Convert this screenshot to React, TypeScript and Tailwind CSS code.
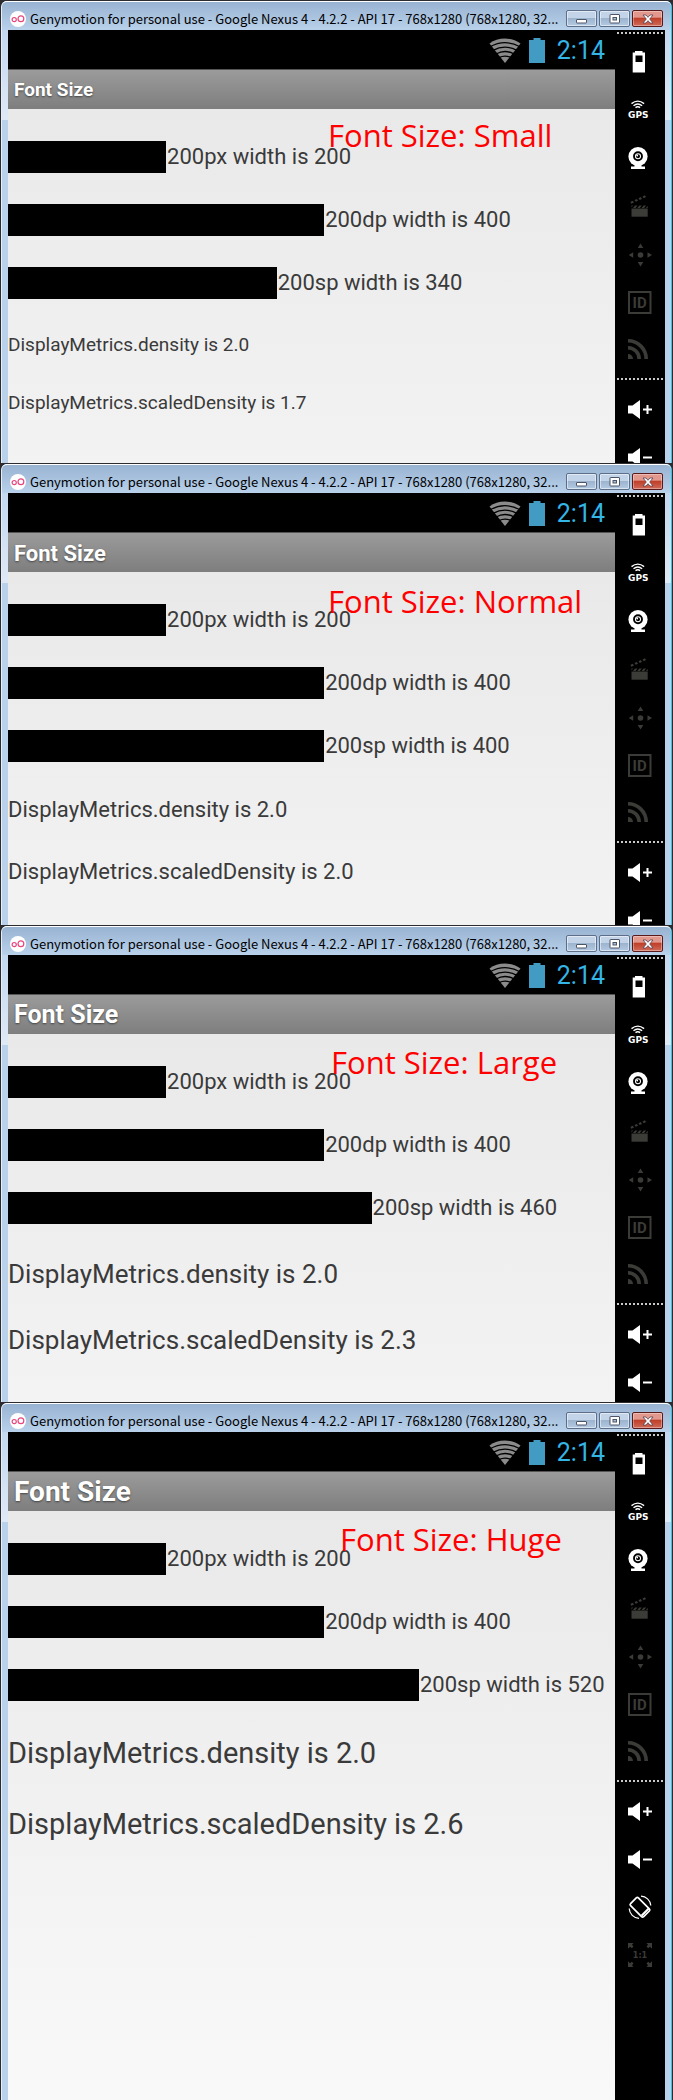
import type { ReactNode } from "react";

type Bar = { unit: string; pixels: number };

type DeviceWindow = {
  name: string;
  scaledDensity: string;
  bars: Bar[];
  toolCount: number;
  titleClass: string;
  metricClass: string;
  screenClass: string;
  noteClass: string;
};

const SCREEN_PIXELS = 768;

const bars = (sp: number): Bar[] => [
  { unit: "px", pixels: 200 },
  { unit: "dp", pixels: 400 },
  { unit: "sp", pixels: sp },
];

const windows: DeviceWindow[] = [
  {
    name: "Small",
    scaledDensity: "1.7",
    bars: bars(340),
    toolCount: 2,
    titleClass: "text-[19px]",
    metricClass: "text-[19px] leading-[26px]",
    screenClass: "pb-[47px]",
    noteClass: "left-[320px] top-[6px]",
  },
  {
    name: "Normal",
    scaledDensity: "2.0",
    bars: bars(400),
    toolCount: 2,
    titleClass: "text-[22px]",
    metricClass: "text-[22px] leading-[30px]",
    screenClass: "pb-[38px]",
    noteClass: "left-[320px] top-[9px]",
  },
  {
    name: "Large",
    scaledDensity: "2.3",
    bars: bars(460),
    toolCount: 2,
    titleClass: "text-[25px]",
    metricClass: "text-[26px] leading-[34px]",
    screenClass: "pb-[45px]",
    noteClass: "left-[323px] top-[8px]",
  },
  {
    name: "Huge",
    scaledDensity: "2.6",
    bars: bars(520),
    toolCount: 4,
    titleClass: "text-[28px]",
    metricClass: "text-[29px] leading-[39px]",
    screenClass: "pb-[256px]",
    noteClass: "left-[332px] top-[8px]",
  },
];

function Icon({ children }: { children: ReactNode }) {
  return (
    <svg viewBox="0 0 24 24" className="size-6 overflow-visible" aria-hidden="true">
      {children}
    </svg>
  );
}

const DIM = "#3b3b37";

const sensorTools: { label: string; icon: ReactNode }[] = [
  {
    label: "Battery",
    icon: (
      <path fill="#fff" fillRule="evenodd" d="M7 1h7.500v1.500H17v20H4.700v-20H7zM7.500 5.500V12h7V5.500z" />
    ),
  },
  {
    label: "GPS",
    icon: (
      <>
        <g fill="none" stroke="#fff" strokeWidth="1.400">
          <path d="M3.500 5.600Q9.800 0.600 16.100 5.600" />
          <path d="M5.500 7.700Q9.800 4.200 14.100 7.700" />
          <path d="M7.500 9.600Q9.800 7.800 12.100 9.600" />
        </g>
        <text x="0" y="20" fill="#fff" fontSize="9" fontWeight="700" fontFamily="DejaVu Sans, sans-serif">
          GPS
        </text>
      </>
    ),
  },
  {
    label: "Camera",
    icon: (
      <>
        <path fill="#fff" d="M3 20.500h3.500V18h7v2.500H17V23H3z" />
        <circle cx="10" cy="10.500" r="9.600" fill="#fff" />
        <circle cx="10" cy="10.300" r="4" fill="#fff" stroke="#000" strokeWidth="1.900" />
        <circle cx="10" cy="10.300" r="2" fill="#000" />
        <circle cx="9.200" cy="9.500" r="0.900" fill="#fff" />
      </>
    ),
  },
  {
    label: "Capture",
    icon: (
      <g fill={DIM}>
        <path d="M3.500 14.500h16.200v8.200H3.500z" />
        <path d="M3.500 11.500h1.500l-1.500 2zM7 11.500h2.500l-2 2.500H5zM11.300 11.500h2.500l-2 2.500H9.300zM15.600 11.500h2.500l-2 2.500h-2.500zM19.700 11.800v2.200h-1.700z" />
        <path d="M2.500 7.800l2.300-1 1.200 1.700-2.800 1.300zM6.500 6l2.300-1.100 1.200 1.800-2.300 1zM10.500 4.200l2.300-1.100 1.200 1.800-2.300 1zM14.500 2.400l2.500-1.200 1 1.900-2.300 1.100z" />
      </g>
    ),
  },
  {
    label: "Move",
    icon: (
      <g fill={DIM}>
        <circle cx="12.500" cy="13" r="2.800" />
        <path d="M12.500 1.500l2.800 4.500h-5.600zM12.500 24.500l2.800-4.500h-5.600zM.7 13l4.500-2.800v5.600zM24 13l-4.500-2.800v5.600z" />
      </g>
    ),
  },
  {
    label: "Device ID",
    icon: (
      <>
        <rect x="1" y="2" width="21.500" height="21" fill="none" stroke={DIM} strokeWidth="2" />
        <text x="4.500" y="18" fill={DIM} fontSize="15" fontWeight="700" fontFamily="Roboto, sans-serif">
          ID
        </text>
      </>
    ),
  },
  {
    label: "Network",
    icon: (
      <>
        <g fill="none" stroke={DIM} strokeWidth="3.600">
          <path d="M0 2.800A18.200 18.200 0 0 1 18.200 21" />
          <path d="M0 9.800A11.200 11.200 0 0 1 11.200 21" />
        </g>
        <path fill={DIM} d="M0 16a5 5 0 0 1 5 5H0z" />
      </>
    ),
  },
];

const speaker = <path fill="#fff" d="M0 8.500h4.500L12 3v19l-7.500-5.500H0z" />;

const deviceTools: { label: string; icon: ReactNode }[] = [
  {
    label: "Volume up",
    icon: (
      <>
        {speaker}
        <path fill="#fff" d="M15 11.500h3.500V8h2v3.500H24v2h-3.500V17h-2v-3.500H15z" />
      </>
    ),
  },
  {
    label: "Volume down",
    icon: (
      <>
        {speaker}
        <path fill="#fff" d="M15 11.500h9v2h-9z" />
      </>
    ),
  },
  {
    label: "Rotate",
    icon: (
      <g fill="none" stroke="#fff">
        <rect x="6.500" y="3" width="11" height="18.500" rx="1.500" strokeWidth="1.700" transform="rotate(-45 12 12.300)" />
        <path strokeWidth="2.200" d="M13.500 20.800l7-7" />
        <path strokeWidth="1.200" d="M13 1.200c5 0 9.300 4 9.800 9.300M1.200 13.500c.3 5.500 4.500 9.500 9.800 9.800" />
      </g>
    ),
  },
  {
    label: "Actual size",
    icon: (
      <>
        <g fill={DIM}>
          <path d="M0 0h5.500L4 1.700l1.500 1.800-1.700 1.700L2 3.700.300 5.500H0zM24 0h-5.500L20 1.700l-1.500 1.800 1.700 1.700L22 3.700l1.700 1.800H24zM0 24h5.500L4 22.300l1.500-1.800-1.700-1.700L2 20.300.300 18.500H0zM24 24h-5.500l1.500-1.700-1.500-1.800 1.700-1.700 1.800 1.500 1.700-1.800H24z" />
        </g>
        <text x="12" y="15" textAnchor="middle" fill={DIM} fontSize="8" fontWeight="700" fontFamily="DejaVu Sans, sans-serif">
          1:1
        </text>
      </>
    ),
  },
];

function Dots() {
  return (
    <div className="h-[2px] shrink-0 bg-[repeating-linear-gradient(90deg,#c8c8c8_0_2px,transparent_2px_4px)]" />
  );
}

function Tools({ items }: { items: { label: string; icon: ReactNode }[] }) {
  return items.map((tool) => (
    <button key={tool.label} type="button" aria-label={tool.label} className="flex h-12 shrink-0 items-center justify-center">
      <Icon>{tool.icon}</Icon>
    </button>
  ));
}

function ToolRail({ toolCount }: { toolCount: number }) {
  return (
    <aside className="flex w-[50px] shrink-0 flex-col overflow-hidden bg-black px-[2px] pt-[2px] contain-size">
      <Dots />
      <div className="flex shrink-0 flex-col pt-1 pb-1">
        <Tools items={sensorTools} />
      </div>
      <Dots />
      <div className="flex shrink-0 flex-col pt-[5px]">
        <Tools items={deviceTools.slice(0, toolCount)} />
      </div>
    </aside>
  );
}

const captionButton =
  "flex h-[17px] w-[31px] items-center justify-center rounded-[2px] border border-[#5d6f88] bg-[linear-gradient(#c3d4e8_45%,#9db4cf_50%,#b4cae3)] shadow-[inset_0_0_0_1px_rgba(255,255,255,0.5)]";

function TitleBar() {
  return (
    <header className="flex h-[29px] items-center rounded-t-[5px] border-t border-white bg-linear-to-b from-[#98b3d2] to-[#b9d1ea] pt-[5px] pr-[8px] pl-[8px]">
      <svg viewBox="0 0 16 16" className="size-4 shrink-0" aria-hidden="true">
        <circle cx="8" cy="8" r="8" fill="#fff" />
        <g fill="none" stroke="#e8457c" strokeWidth="1.200">
          <circle cx="4.200" cy="8.600" r="2.100" />
          <circle cx="10.900" cy="7.700" r="2.900" />
        </g>
      </svg>
      <h1 className="ml-1 min-w-0 flex-1 overflow-hidden font-['Noto_Sans_CJK_SC',sans-serif] text-[13px] leading-5 whitespace-nowrap text-black">
        Genymotion for personal use - Google Nexus 4 - 4.2.2 - API 17 - 768x1280 (768x1280, 32...
      </h1>
      <div className="flex gap-[2px]">
        <button type="button" aria-label="Minimize" className={captionButton}>
          <svg viewBox="0 0 12 12" className="size-3" aria-hidden="true">
            <rect x="0.500" y="6.500" width="10" height="3.500" rx="0.500" fill="#fff" stroke="#4c5566" />
          </svg>
        </button>
        <button type="button" aria-label="Maximize" className={captionButton}>
          <svg viewBox="0 0 12 12" className="size-3" aria-hidden="true">
            <rect x="1" y="1.500" width="9.500" height="8.500" rx="0.500" fill="#fff" stroke="#4c5566" />
            <rect x="4" y="4.500" width="3.500" height="2.500" fill="#a9bdd6" stroke="#4c5566" />
          </svg>
        </button>
        <button
          type="button"
          aria-label="Close"
          className="flex h-[17px] w-[31px] items-center justify-center rounded-[2px] border border-[#5a1a1c] bg-[linear-gradient(#e2988c_40%,#c0402a_50%,#cf6a58)] shadow-[inset_0_0_0_1px_rgba(255,255,255,0.35)]"
        >
          <svg viewBox="0 0 12 12" className="size-3" aria-hidden="true">
            <path
              d="M1 2h3l2 2.300L8 2h3L7.700 6 11 10H8L6 7.700 4 10H1l3.300-4z"
              fill="#fff"
              stroke="#544050"
              strokeWidth="0.800"
            />
          </svg>
        </button>
      </div>
    </header>
  );
}

function StatusBar() {
  return (
    <div className="flex h-[39px] items-center justify-end bg-black pt-px pr-[10px]">
      <svg viewBox="0 0 32 25" className="mr-2 h-[25px] w-8" aria-hidden="true">
        <path fill="#8b8b8b" d="M16 25L0.500 5.500Q7 0.500 16 0.500T31.500 5.500z" />
        <g fill="none" stroke="#000" strokeWidth="1.300">
          <path d="M1 8.800Q16 0.500 31 8.800" />
          <path d="M4 12.300Q16 6 28 12.300" />
          <path d="M7 16Q16 11 25 16" />
          <path d="M10 19.600Q16 16.500 22 19.600" />
        </g>
      </svg>
      <svg viewBox="0 0 16 25" className="mr-3 h-[25px] w-4" aria-hidden="true">
        <path fill="#419bc3" d="M4.500 0h7v2H16v23H0V2h4.500z" />
      </svg>
      <span className="text-[25px] leading-[29px] text-[#33b5e5]">2:14</span>
    </div>
  );
}

function EmulatorWindow({ win }: { win: DeviceWindow }) {
  return (
    <section className="border-t border-r border-l border-[#2c2c30] bg-[#2c2c30]">
      <div className="rounded-t-[6px] border-r border-l border-r-[#35c3e6] border-l-[#e6eef8] bg-[#b9d1ea]">
        <TitleBar />
        <div className="flex bg-[linear-gradient(#c3d8ef,#dfe9f6_90px,#b9d1ea_90px)] px-[6px]">
          <main className="min-w-0 flex-1 font-[Roboto,sans-serif] text-[#3a3a3a]">
            <StatusBar />
            <div className="flex h-10 items-center border-t border-[#555] bg-linear-to-b from-[#9b9b9b] to-[#7e7e7e] pt-px pl-[6px]">
              <h2 className={`font-bold text-white [text-shadow:0_1px_2px_rgba(0,0,0,0.5)] ${win.titleClass}`}>Font Size</h2>
            </div>
            <div className={`relative bg-[linear-gradient(#e9e9e9,#f9f9f9_590px)] pt-8 ${win.screenClass}`}>
              <div className="flex flex-col gap-[31px]">
                {win.bars.map((bar) => (
                  <div key={bar.unit} className="flex h-8 items-center">
                    <div className="h-8 shrink-0 bg-black" style={{ width: `${(bar.pixels / SCREEN_PIXELS) * 100}%` }} />
                    <span className="pl-px text-[22px] leading-8 whitespace-nowrap">
                      200{bar.unit} width is {bar.pixels}
                    </span>
                  </div>
                ))}
              </div>
              <div className={`mt-[33px] flex flex-col gap-8 whitespace-nowrap ${win.metricClass}`}>
                <p>DisplayMetrics.density is 2.0</p>
                <p>DisplayMetrics.scaledDensity is {win.scaledDensity}</p>
              </div>
              <p
                className={`absolute font-['Open_Sans',sans-serif] text-[31px] leading-10 whitespace-nowrap text-[#ff0000] ${win.noteClass}`}
              >
                Font Size: {win.name}
              </p>
            </div>
          </main>
          <ToolRail toolCount={win.toolCount} />
        </div>
      </div>
    </section>
  );
}

export default function App() {
  return (
    <div className="flex flex-col">
      {windows.map((win) => (
        <EmulatorWindow key={win.name} win={win} />
      ))}
    </div>
  );
}
